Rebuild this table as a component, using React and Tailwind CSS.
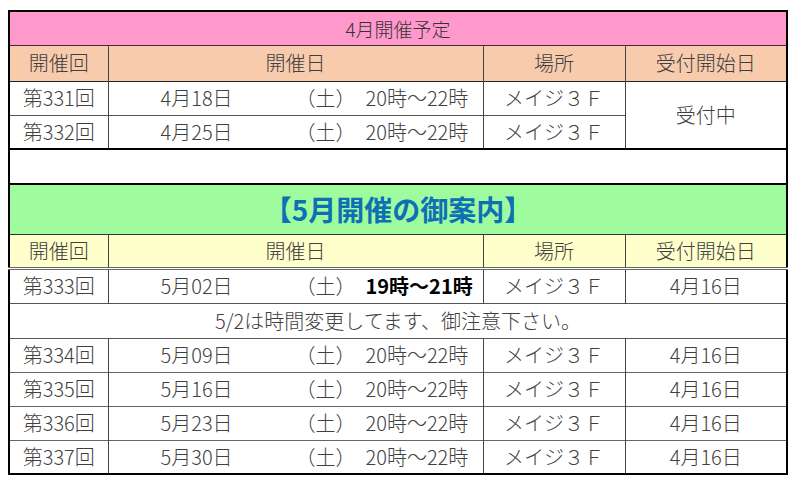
import React from "react";

const F = { fontFamily: '"Noto Sans CJK JP", "Noto Sans", sans-serif' };

function DateCell({ date, time, bold }) {
  return (
    <td className="border-r border-[#444] p-0">
      <div className="flex items-center pl-[52px] whitespace-nowrap">
        <span className="w-[135px]">{date}</span>
        <span className="w-[70px]">（土）</span>
        <span className={bold ? "font-bold text-black" : ""}>{time}</span>
      </div>
    </td>
  );
}

export default function App() {
  const may = [
    ["第334回", "5月09日"],
    ["第335回", "5月16日"],
    ["第336回", "5月23日"],
    ["第337回", "5月30日"],
  ];
  return (
    <div className="w-[800px] h-[480px] bg-white pt-[10px] pl-[8px]" style={F}>
      <table className="border-collapse table-fixed border-2 border-black text-[20px] font-light leading-none text-[#404040] w-[778px]">
        <colgroup>
          <col className="w-[99px]" />
          <col className="w-[375px]" />
          <col className="w-[142px]" />
          <col className="w-[162px]" />
        </colgroup>
        <tbody>
          <tr className="h-[34px] bg-[#ff99cc] border-b border-[#333]">
            <td colSpan={4} className="text-center text-[19px] text-[#333]">4月開催予定</td>
          </tr>
          <tr className="h-[36px] bg-[#f8cbad] border-b border-[#222] text-center">
            <td className="border-r border-[#444]">開催回</td>
            <td className="border-r border-[#444]">開催日</td>
            <td className="border-r border-[#444]">場所</td>
            <td>受付開始日</td>
          </tr>
          <tr className="h-[34px] border-b border-[#555]">
            <td className="border-r border-[#444] text-center">第331回</td>
            <DateCell date="4月18日" time="20時〜22時" />
            <td className="border-r border-[#444] text-center">メイジ３Ｆ</td>
            <td rowSpan={2} className="text-center">受付中</td>
          </tr>
          <tr className="h-[34px] border-b-2 border-black">
            <td className="border-r border-[#444] text-center">第332回</td>
            <DateCell date="4月25日" time="20時〜22時" />
            <td className="border-r border-[#444] text-center">メイジ３Ｆ</td>
          </tr>
          <tr className="h-[35px] border-b-2 border-black">
            <td colSpan={4}></td>
          </tr>
          <tr className="h-[50px] bg-[#9efc9e] border-b border-[#333]">
            <td colSpan={4} className="text-center text-[28px] font-bold text-[#0f6fb5]">【5月開催の御案内】</td>
          </tr>
          <tr className="h-[34px] bg-[#ffffcc] border-b-[3px] border-double border-[#666] text-center">
            <td className="border-r border-[#444]">開催回</td>
            <td className="border-r border-[#444]">開催日</td>
            <td className="border-r border-[#444]">場所</td>
            <td>受付開始日</td>
          </tr>
          <tr className="h-[35px] border-b border-[#555]">
            <td className="border-r border-[#444] text-center">第333回</td>
            <DateCell date="5月02日" time="19時〜21時" bold />
            <td className="border-r border-[#444] text-center">メイジ３Ｆ</td>
            <td className="text-center">4月16日</td>
          </tr>
          <tr className="h-[35px] border-b border-[#555]">
            <td colSpan={4} className="text-center">5/2は時間変更してます、御注意下さい。</td>
          </tr>
          {may.map(([n, d], i) => (
            <tr key={n} className={"h-[34px] " + (i < may.length - 1 ? "border-b border-[#666]" : "")}>
              <td className="border-r border-[#444] text-center">{n}</td>
              <DateCell date={d} time="20時〜22時" />
              <td className="border-r border-[#444] text-center">メイジ３Ｆ</td>
              <td className="text-center">4月16日</td>
            </tr>
          ))}
        </tbody>
      </table>
    </div>
  );
}
